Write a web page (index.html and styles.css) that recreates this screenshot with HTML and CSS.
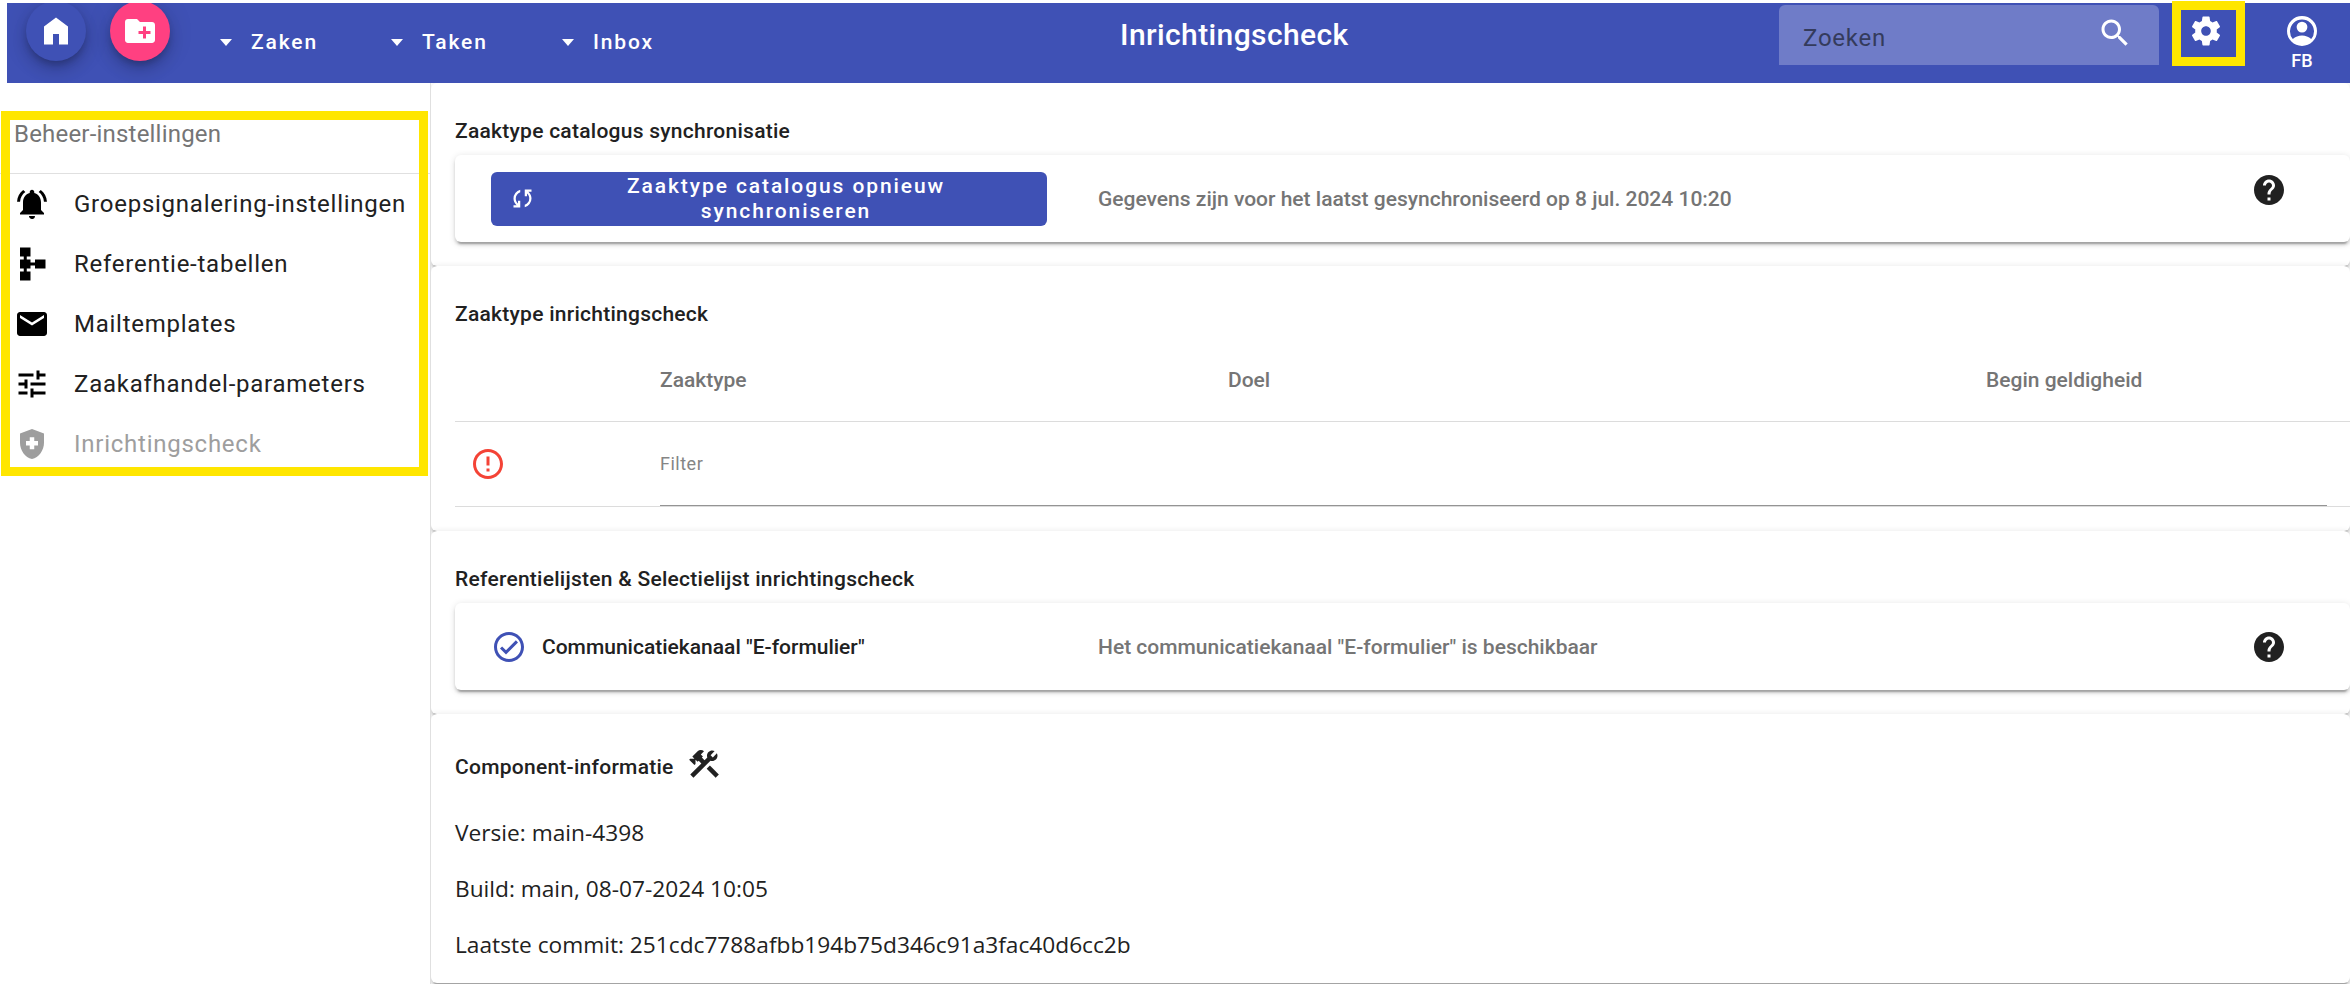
FILE: index.html
```html
<!DOCTYPE html>
<html lang="nl">
<head>
<meta charset="utf-8">
<title>Inrichtingscheck</title>
<link rel="stylesheet" href="styles.css">
</head>
<body>
<header class="toolbar">
  <nav class="toolbar-nav">
    <a class="fab fab-home"><svg class="icon" viewBox="0 0 24 24"><path d="M4 21V9l8-6 8 6v12h-6v-7h-4v7z"/></svg></a>
    <a class="fab fab-new"><svg class="icon" viewBox="0 0 24 24"><path d="M20 6h-8l-2-2H4c-1.11 0-1.99.89-1.99 2L2 18c0 1.110.89 2 2 2h16c1.110 0 2-.89 2-2V8c0-1.110-.89-2-2-2zm-1 8h-3v3h-2v-3h-3v-2h3V9h2v3h3v2z"/></svg></a>
    <a class="menu"><i class="caret"></i>Zaken</a>
    <a class="menu"><i class="caret"></i>Taken</a>
    <a class="menu"><i class="caret"></i>Inbox</a>
  </nav>
  <h1 class="title">Inrichtingscheck</h1>
  <div class="toolbar-end">
    <div class="search"><span>Zoeken</span><svg class="icon search-icon" viewBox="0 0 24 24"><path d="M15.5 14h-.79l-.28-.27C15.41 12.59 16 11.11 16 9.5 16 5.91 13.09 3 9.500 3S3 5.910 3 9.500 5.910 16 9.500 16c1.610 0 3.090-.59 4.230-1.570l.27.28v.79l5 4.990L20.490 19l-4.990-5zm-6 0C7.010 14 5 11.990 5 9.500S7.010 5 9.500 5 14 7.010 14 9.500 11.990 14 9.500 14z"/></svg></div>
    <a class="settings"><svg class="icon" viewBox="0 0 24 24"><path d="M19.140 12.940c.04-.3.06-.61.06-.94 0-.32-.02-.64-.07-.94l2.030-1.580c.18-.14.23-.41.12-.61l-1.920-3.320c-.12-.22-.37-.29-.59-.22l-2.390.96c-.5-.38-1.030-.7-1.620-.94l-.36-2.540c-.04-.24-.24-.41-.48-.41h-3.840c-.24 0-.43.17-.47.41l-.36 2.540c-.59.24-1.130.57-1.620.94l-2.390-.96c-.22-.08-.47 0-.59.22L2.740 8.870c-.12.21-.08.47.12.61l2.030 1.580c-.05.3-.09.63-.09.94s.02.64.07.94l-2.030 1.580c-.18.14-.23.41-.12.61l1.920 3.320c.12.22.37.29.59.22l2.390-.96c.5.38 1.030.7 1.620.94l.36 2.540c.05.24.24.41.48.41h3.840c.24 0 .44-.17.47-.41l.36-2.540c.59-.24 1.130-.56 1.620-.94l2.390.96c.22.08.47 0 .59-.22l1.920-3.320c.12-.22.07-.47-.12-.61l-2.010-1.580zM12 15.200c-1.770 0-3.200-1.430-3.200-3.200s1.430-3.200 3.200-3.200 3.200 1.430 3.200 3.200-1.430 3.200-3.200 3.200z"/></svg></a>
    <a class="account"><svg class="icon" viewBox="0 0 24 24"><path fill-rule="evenodd" d="M12 2a10 10 0 1 0 0 20 10 10 0 0 0 0-20zM18.140 17.380C16.450 15.900 14.320 15 12 15s-4.450.9-6.140 2.380A8 8 0 1 1 18.140 17.380z"/><circle cx="12" cy="9.400" r="3.600"/></svg><span>FB</span></a>
  </div>
</header>

<div class="layout">
  <aside class="sidebar">
    <div class="sidebar-title">Beheer-instellingen</div>
    <a class="side-item"><svg class="icon" viewBox="0 0 24 24"><path d="M7.580 4.080L6.150 2.650C3.750 4.480 2.170 7.300 2.030 10.500h2c.15-2.650 1.510-4.970 3.550-6.420zm12.390 6.420h2c-.15-3.200-1.730-6.020-4.120-7.850l-1.420 1.430c2.020 1.450 3.390 3.770 3.540 6.420zM18 11c0-3.070-1.640-5.640-4.500-6.320V4c0-.83-.67-1.500-1.500-1.500s-1.500.67-1.500 1.500v.68C7.630 5.360 6 7.920 6 11v5l-2 2v1h16v-1l-2-2v-5zm-6 11c.14 0 .27-.01.4-.04.65-.14 1.180-.58 1.440-1.180.1-.24.150-.5.150-.78h-4c.01 1.100.9 2 2.010 2z"/></svg><span>Groepsignalering-instellingen</span></a>
    <a class="side-item"><svg class="icon" viewBox="0 0 24 24"><path d="M14 9v2h-3V9H8.500V7H11V1H4v6h2.500v2H4v6h2.500v2H4v6h7v-6H8.500v-2H11v-2h3v2h7V9z"/></svg><span>Referentie-tabellen</span></a>
    <a class="side-item"><svg class="icon" viewBox="0 0 24 24"><path d="M20 4H4c-1.100 0-1.990.9-1.990 2L2 18c0 1.100.9 2 2 2h16c1.100 0 2-.9 2-2V6c0-1.100-.9-2-2-2zm0 4l-8 5-8-5V6l8 5 8-5v2z"/></svg><span>Mailtemplates</span></a>
    <a class="side-item"><svg class="icon" viewBox="0 0 24 24"><path d="M3 17v2h6v-2H3zM3 5v2h10V5H3zm10 16v-2h8v-2h-8v-2h-2v6h2zM7 9v2H3v2h4v2h2V9H7zm14 4v-2H11v2h10zm-6-4h2V7h4V5h-4V3h-2v6z"/></svg><span>Zaakafhandel-parameters</span></a>
    <a class="side-item disabled"><svg class="icon" viewBox="0 0 24 24"><path fill-rule="evenodd" d="M12 2L4 5v6.090c0 5.050 3.410 9.760 8 10.910 4.590-1.150 8-5.860 8-10.910V5l-8-3zM10.500 7.500h3v2.500h2.500v3h-2.500v2.500h-3V13H8v-3h2.500z"/></svg><span>Inrichtingscheck</span></a>
  </aside>

  <main class="content">
    <section class="section">
      <h2 class="heading">Zaaktype catalogus synchronisatie</h2>
      <div class="card">
        <div class="card-main">
          <button class="sync"><svg class="icon-small" viewBox="0 0 24 24"><path d="M4 20v-2h2.750l-.4-.35q-1.225-1.225-1.787-2.662T4 12.050q0-2.775 1.663-4.937T10 4.250v2.100Q8.200 7 7.100 8.563T6 12.050q0 1.125.425 2.188T7.750 16.200l.25.25V14h2v6H4Zm10-.25v-2.100q1.800-.65 2.900-2.212T18 11.950q0-1.125-.425-2.187T16.250 7.800L16 7.550V10h-2V4h6v2h-2.750l.4.350q1.225 1.225 1.788 2.663T20 11.950q0 2.775-1.662 4.938T14 19.750Z"/></svg><span>Zaaktype catalogus opnieuw<br>synchroniseren</span></button>
        </div>
        <p class="card-text">Gegevens zijn voor het laatst gesynchroniseerd op 8 jul. 2024 10:20</p>
        <svg class="icon help help-high" viewBox="0 0 24 24"><path d="M12 2C6.480 2 2 6.480 2 12s4.480 10 10 10 10-4.480 10-10S17.520 2 12 2zm1 17h-2v-2h2v2zm2.070-7.750l-.9.920C13.450 12.900 13 13.500 13 15h-2v-.5c0-1.100.45-2.100 1.170-2.830l1.240-1.260c.37-.36.590-.86.590-1.410 0-1.100-.9-2-2-2s-2 .9-2 2H8c0-2.210 1.790-4 4-4s4 1.790 4 4c0 .88-.36 1.680-.93 2.250z"/></svg>
      </div>
    </section>

    <section class="section">
      <h2 class="heading">Zaaktype inrichtingscheck</h2>
      <div class="table">
        <div class="row row-head"><span></span><span>Zaaktype</span><span>Doel</span><span>Begin geldigheid</span></div>
        <div class="row row-filter">
          <svg class="icon error" viewBox="0 0 24 24"><path d="M11 15h2v2h-2zm0-8h2v6h-2zm.99-5C6.470 2 2 6.480 2 12s4.470 10 9.990 10C17.520 22 22 17.520 22 12S17.520 2 11.990 2zM12 20c-4.420 0-8-3.580-8-8s3.580-8 8-8 8 3.580 8 8-3.580 8-8 8z"/></svg>
          <div class="filter">Filter</div>
        </div>
      </div>
    </section>

    <section class="section">
      <h2 class="heading">Referentielijsten &amp; Selectielijst inrichtingscheck</h2>
      <div class="card">
        <div class="card-main channel"><svg class="icon ok" viewBox="0 0 24 24"><path d="M16.590 7.580L10 14.170l-2.590-2.580L6 13l4 4 8-8zM12 2C6.480 2 2 6.480 2 12s4.480 10 10 10 10-4.480 10-10S17.520 2 12 2zm0 18c-4.420 0-8-3.580-8-8s3.580-8 8-8 8 3.580 8 8-3.580 8-8 8z"/></svg><span>Communicatiekanaal "E-formulier"</span></div>
        <p class="card-text">Het communicatiekanaal "E-formulier" is beschikbaar</p>
        <svg class="icon help" viewBox="0 0 24 24"><path d="M12 2C6.480 2 2 6.480 2 12s4.480 10 10 10 10-4.480 10-10S17.520 2 12 2zm1 17h-2v-2h2v2zm2.070-7.750l-.9.920C13.450 12.900 13 13.500 13 15h-2v-.5c0-1.100.45-2.100 1.170-2.830l1.240-1.260c.37-.36.590-.86.590-1.410 0-1.100-.9-2-2-2s-2 .9-2 2H8c0-2.210 1.790-4 4-4s4 1.790 4 4c0 .88-.36 1.680-.93 2.250z"/></svg>
      </div>
    </section>

    <section class="section section-info">
      <div class="info-head">
        <h2 class="heading">Component-informatie</h2>
        <svg class="icon" viewBox="0 0 24 24"><path d="M13.783 15.172l2.121-2.121 5.996 5.996-2.121 2.121z"/><path d="M17.500 10c1.930 0 3.500-1.570 3.500-3.500 0-.58-.16-1.120-.41-1.600l-2.700 2.700-1.490-1.490 2.700-2.700c-.48-.25-1.020-.41-1.600-.41C15.570 3 14 4.570 14 6.500c0 .41.08.8.21 1.160l-1.850 1.850-1.780-1.780.71-.71-1.410-1.410L12 3.490a3 3 0 0 0-4.240 0L4.220 7.030l1.410 1.410H2.810l-.71.710 3.540 3.540.71-.71V9.150l1.410 1.410.71-.71 1.780 1.780-7.410 7.410 2.120 2.120L16.340 9.790c.36.130.75.210 1.160.210z"/></svg>
      </div>
      <p class="info">Versie: main-4398</p>
      <p class="info">Build: main, 08-07-2024 10:05</p>
      <p class="info">Laatste commit: 251cdc7788afbb194b75d346c91a3fac40d6cc2b</p>
    </section>
  </main>
</div>

<div class="marker marker-settings"></div>
<div class="marker marker-sidebar"></div>
</body>
</html>
```
FILE: styles.css
```css
* { box-sizing: border-box; }
html, body { height: 984px; overflow: hidden; }
body {
  margin: 0;
  padding-top: 3px;
  position: relative;
  background: #fff;
  color: #212121;
  font-family: Roboto, "Liberation Sans", sans-serif;
  font-size: 21px;
}
h1, h2, p { margin: 0; font-weight: 500; }
.icon { width: 36px; height: 36px; fill: currentColor; flex: none; display: block; }
.icon-small { width: 27px; height: 27px; fill: currentColor; flex: none; }

.toolbar {
  display: grid;
  grid-template-columns: 1113px 1fr auto;
  align-items: start;
  height: 80px;
  margin-left: 7px;
  overflow: hidden;
  background: #3f51b5;
  color: #fff;
}
.toolbar-nav { display: flex; align-items: flex-start; padding-left: 19px; }
.fab {
  display: grid;
  place-items: center;
  width: 60px;
  height: 60px;
  margin: -2px 24px 0 0;
  border-radius: 50%;
  box-shadow: 0 4.5px 7.5px -1.5px rgba(0,0,0,.2), 0 9px 15px rgba(0,0,0,.14), 0 1.5px 27px rgba(0,0,0,.12);
}
.fab-home { background: #3f51b5; }
.fab-new { background: #ff4081; margin-right: 50px; }
.menu {
  display: flex;
  align-items: center;
  height: 30px;
  width: 171px;
  margin-top: 24px;
  font-weight: 500;
  letter-spacing: 1.85px;
}
.caret {
  margin-right: 19px;
  border: 6px solid transparent;
  border-top: 7px solid #fff;
  border-bottom: 0;
}
.title { font-size: 30px; line-height: 40px; margin-top: 12px; letter-spacing: .4px; white-space: nowrap; }
.toolbar-end { display: flex; align-items: flex-start; }
.search {
  display: flex;
  justify-content: space-between;
  width: 380px;
  height: 60px;
  margin: 2px 29px 0 0;
  padding: 10px 26px 0 24px;
  border-radius: 6px 6px 0 0;
  background: #6f7cc8;
  color: #343b5c;
  font-size: 24px;
  line-height: 46px;
  letter-spacing: .75px;
}
.search-icon { color: #fff; }
.settings { margin: 10px 60px 0 0; }
.account { display: flex; flex-direction: column; align-items: center; width: 36px; margin: 10px 30px 0 0; font-size: 18px; line-height: 24px; font-weight: 500; }

.layout { display: flex; height: 901px; }
.sidebar { width: 431px; flex: none; border-right: 1px solid #e0e0e0; }
.sidebar-title {
  height: 91px;
  padding: 36px 0 0 14px;
  border-bottom: 1px solid #e0e0e0;
  font-size: 24px;
  line-height: 30px;
  letter-spacing: .2px;
  color: #757575;
}
.side-item {
  display: flex;
  align-items: center;
  gap: 24px;
  height: 60px;
  padding-left: 14px;
  font-size: 24px;
  letter-spacing: .75px;
  color: #212121;
}
.side-item .icon { color: #000; }
.side-item.disabled, .side-item.disabled .icon { color: #9e9e9e; }

.content { flex: 1; min-width: 0; overflow: hidden; }
.section {
  height: 183px;
  padding: 36px 0 24px 24px;
  border-radius: 6px;
  background: #fff;
  box-shadow: 0 4.5px 1.5px -3px rgba(0,0,0,.2), 0 3px 3px rgba(0,0,0,.14), 0 1.5px 7.5px rgba(0,0,0,.12);
}
.section:nth-child(2) { height: 265px; }
.heading { font-size: 21px; line-height: 24px; letter-spacing: .26px; white-space: nowrap; }
.card {
  display: flex;
  align-items: center;
  height: 87px;
  margin-top: 12px;
  padding-left: 36px;
  border-radius: 6px;
  background: #fff;
  box-shadow: 0 4.5px 1.5px -3px rgba(0,0,0,.2), 0 3px 3px rgba(0,0,0,.14), 0 1.5px 7.5px rgba(0,0,0,.12);
}
.card-main { width: 607px; flex: none; }
.card-text { flex: 1; color: #757575; }
.help { margin-right: 63px; }
.help-high { margin-top: -17px; }
.sync {
  display: flex;
  align-items: center;
  width: 556px;
  height: 54px;
  padding: 0 11px 0 18px;
  border: 0;
  border-radius: 6px;
  background: #3f51b5;
  color: #fff;
  font: 500 21px/25px Roboto, sans-serif;
  letter-spacing: 1.9px;
}
.sync span { flex: 1; text-align: center; }
.channel { display: flex; align-items: center; gap: 15px; font-weight: 500; }
.ok { color: #3f51b5; }

.table { margin-top: 12px; }
.row { display: grid; align-items: center; border-bottom: 1px solid #dcdcdc; }
.row-head { grid-template-columns: 205px 568px 758px 1fr; height: 84px; color: #757575; font-weight: 500; }
.row-filter { grid-template-columns: 205px 1fr; height: 85px; padding-right: 23px; }
.error { margin-left: 15px; color: #f44336; }
.filter { height: 84px; line-height: 84px; border-bottom: 1px solid #949494; font-size: 18px; letter-spacing: .5px; color: #858585; }

.section-info { height: 269px; padding-top: 32px; }
.info-head { display: flex; gap: 12px; margin-bottom: 29px; }
.info-head .heading { line-height: 42px; }
.info { font: 400 22.7px/32px "Open Sans", "Noto Sans", sans-serif; margin-bottom: 24px; white-space: nowrap; }

.marker { position: absolute; border: 9px solid #ffe600; }
.marker-settings { left: 2172px; top: 1px; width: 73px; height: 65px; }
.marker-sidebar { left: 1px; top: 111px; width: 427px; height: 365px; }
```
